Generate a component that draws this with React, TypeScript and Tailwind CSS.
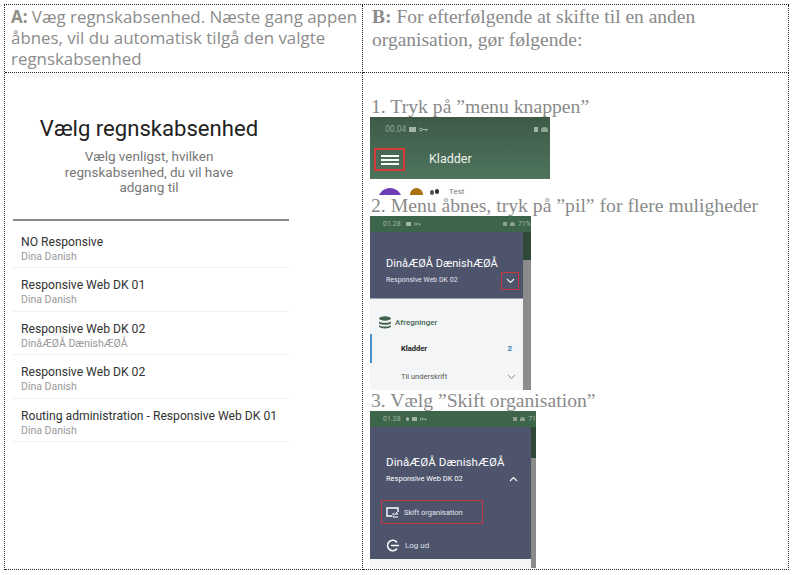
const serif = "font-['Liberation_Serif',serif]";

const orgs = [
  ["NO Responsive", "Dina Danish"],
  ["Responsive Web DK 01", "Dina Danish"],
  ["Responsive Web DK 02", "DinåÆØÅ DænishÆØÅ"],
  ["Responsive Web DK 02", "Dina Danish"],
  ["Routing administration - Responsive Web DK 01", "Dina Danish"],
];

function StatusBar({ time, extra, battery }: { time: string; extra?: boolean; battery: string }) {
  return (
    <div className="flex h-[16px] items-center justify-between bg-[#3d6549] pl-[13px] text-[7px] text-[#a3b5a8] font-['Roboto',sans-serif]">
      <div className="flex items-center gap-[3px]">
        <span className="mr-[2px]">{time}</span>
        {extra && <span className="h-[4px] w-[3px] rounded-full bg-[#a3b5a8]" />}
        <span className="h-[4px] w-[5px] bg-[#a3b5a8]" />
        <svg width="7" height="4" viewBox="0 0 7 4"><circle cx="1.5" cy="2" r="1.2" fill="none" stroke="#a3b5a8" strokeWidth="0.8" /><path d="M3 2h4M5.5 2v1.5" stroke="#a3b5a8" strokeWidth="0.8" /></svg>
      </div>
      <div className="flex items-center gap-[3px]">
        <span className="h-[4px] w-[4px] bg-[#8ea094]" />
        <span className="h-[4px] w-[5px] rounded-t-full bg-[#8ea094]" />
        <span className="whitespace-nowrap">{battery}</span>
      </div>
    </div>
  );
}

function Shot1() {
  return (
    <div className="h-[78px] w-[180px] overflow-hidden">
      <div className="h-[62px] bg-gradient-to-b from-[#3e5a47] to-[#4e745c] shadow-[0_1px_1px_#c4c4c4]">
        <div className="flex h-[25px] items-center justify-between pl-[15px] pr-[2px] text-[8.5px] text-[#8fa597] font-['Roboto',sans-serif]">
          <div className="flex items-center gap-[3px]">
            <span>00.04</span>
            <span className="h-[5px] w-[7px] bg-[#a3b5a8]" />
            <svg width="9" height="5" viewBox="0 0 9 5"><circle cx="2" cy="2.5" r="1.4" fill="none" stroke="#a3b5a8" /><path d="M3.500 2.500H9M7 2.500v2" stroke="#a3b5a8" /></svg>
          </div>
          <div className="flex items-center gap-[3px]">
            <span className="h-[5px] w-[4px] bg-[#a3b5a8]" />
            <span className="h-[5px] w-[7px] rounded-t-full bg-[#8fa597]" />
          </div>
        </div>
        <div className="mt-[6px] flex items-center pl-[4px]">
          <div className="flex h-[23px] w-[31px] flex-col items-center justify-center gap-[2px] border-2 border-[#d8393a]">
            <span className="h-[2px] w-[18px] bg-white" />
            <span className="h-[2px] w-[18px] bg-white" />
            <span className="h-[2px] w-[18px] bg-white" />
          </div>
          <span className="ml-[24px] text-[12.5px] text-[#eef2ef] font-['Roboto',sans-serif]">Kladder</span>
        </div>
      </div>
      <div className="flex items-start bg-white pl-[8px] pt-[9px]">
        <span className="h-[24px] w-[24px] rounded-full bg-[#6c3fb5]" />
        <span className="ml-[8px] h-[14px] w-[13px] rounded-full bg-[#a66f10]" />
        <span className="ml-[7px] mt-[2px] h-[5px] w-[4px] rounded-full bg-[#555]" />
        <span className="ml-[1px] mt-[1px] h-[5px] w-[4px] rounded-full bg-[#333]" />
        <span className="ml-[10px] text-[8px] leading-[8px] text-[#777] font-['Roboto',sans-serif]">Test</span>
      </div>
    </div>
  );
}

function Shot2() {
  return (
    <div className="flex h-[174px] w-[161px] flex-col overflow-hidden font-['Roboto',sans-serif]">
      <StatusBar time="01.28" battery="71%" />
      <div className="flex min-h-0 flex-1">
        <div className="flex w-[153px] flex-col">
          <div className="relative h-[67px] border-b border-[#9ea3b3] bg-[#4d546c] pl-[16px] pt-[25px] text-white">
            <div className="text-[11px] leading-[14px] whitespace-nowrap">DinåÆØÅ DænishÆØÅ</div>
            <div className="mt-[3px] text-[7px] leading-[12px] text-[#e4e6ec] whitespace-nowrap">Responsive Web DK 02</div>
            <div className="absolute left-[131px] top-[40px] flex h-[18px] w-[18px] items-center justify-center border border-[#c8373d]">
              <svg width="9" height="6" viewBox="0 0 9 6"><path d="M1 1l3.500 3.500L8 1" fill="none" stroke="#f3f3f3" strokeWidth="1.2" /></svg>
            </div>
          </div>
          <div className="relative flex-1 bg-[#f4f5f6]">
            <div className="flex items-center gap-[3px] pl-[8px] pt-[17px] text-[8px] font-medium leading-[12px] text-[#42644f]">
              <svg width="14" height="13" viewBox="0 0 14 13"><ellipse cx="7" cy="2.500" rx="6" ry="2.200" fill="#42644f" /><path d="M1 5.200c1 2 11 2 12 0v2c-1 2-11 2-12 0zM1 9c1 2 11 2 12 0v1.500c-1 2.500-11 2.500-12 0z" fill="#42644f" /></svg>
              Afregninger
            </div>
            <div className="absolute left-0 top-[35px] h-[29px] w-[2px] bg-[#4a90c8]" />
            <div className="flex items-center justify-between pl-[31px] pr-[11px] pt-[14px] text-[7.5px] font-bold leading-[12px] text-[#222]">
              Kladder <span className="text-[8px] text-[#3d81ad]">2</span>
            </div>
            <div className="flex items-center justify-between pl-[31px] pr-[7px] pt-[16px] text-[7.5px] leading-[12px] text-[#555]">
              Til underskrift
              <svg width="9" height="6" viewBox="0 0 9 6"><path d="M1 1l3.500 3.500L8 1" fill="none" stroke="#888" /></svg>
            </div>
          </div>
        </div>
        <div className="flex w-[8px] flex-col">
          <div className="h-[28px] bg-[#2e4a37]" />
          <div className="flex-1 bg-[#8b8b8b]" />
        </div>
      </div>
    </div>
  );
}

function Shot3() {
  return (
    <div className="flex h-[157px] w-[166px] flex-col overflow-hidden font-['Roboto',sans-serif]">
      <StatusBar time="01.28" extra battery="71" />
      <div className="flex min-h-0 flex-1">
        <div className="flex w-[161px] flex-col">
          <div className="relative flex-1 bg-[#4d546c] text-white">
            <div className="pl-[16px] pt-[28px] text-[11.5px] leading-[14px] tracking-[0.1px] whitespace-nowrap">DinåÆØÅ DænishÆØÅ</div>
            <div className="flex items-center justify-between pl-[16px] pr-[13px] pt-[4px] text-[7.5px] leading-[12px] whitespace-nowrap">
              Responsive Web DK 02
              <svg width="9" height="6" viewBox="0 0 9 6"><path d="M1 5l3.500-3.500L8 5" fill="none" stroke="#f3f3f3" strokeWidth="1.2" /></svg>
            </div>
            <div className="ml-[11px] mt-[15px] flex h-[24px] w-[102px] items-center gap-[5px] border border-[#c8373d] pl-[4px] pt-[2px] text-[7.5px] text-[#e4e6ec]">
              <svg width="13" height="12" viewBox="0 0 13 12"><path d="M12 5V1H1v8h5" fill="none" stroke="#fff" strokeWidth="1.4" /><path d="M6 7h6M10 5l2 2M7 10h5M8 8.500L6.500 10" fill="none" stroke="#fff" /></svg>
              Skift organisation
            </div>
            <div className="ml-[16px] mt-[15px] flex items-center gap-[6px] text-[8px] text-[#dfe1e7]">
              <svg width="13" height="13" viewBox="0 0 13 13"><path d="M11 3.500A5.200 5.200 0 1 0 11 9.500" fill="none" stroke="#fff" strokeWidth="1.5" /><path d="M5 6.500h8" stroke="#fff" strokeWidth="1.5" /></svg>
              Log ud
            </div>
          </div>
          <div className="h-[9px] bg-[#f4f5f6]" />
        </div>
        <div className="flex w-[5px] flex-col">
          <div className="h-[31px] bg-[#2e4a37]" />
          <div className="flex-1 bg-[#8b8b8b]" />
        </div>
      </div>
    </div>
  );
}

export default function App() {
  return (
    <div className="h-[575px] w-[795px] overflow-hidden bg-white pl-[4px] pt-[4px]">
      <div className="grid h-[566px] w-[785px] grid-cols-[358px_426px] grid-rows-[68px_497px] border-t border-l border-dotted border-[#222]">
        <div className="border-r border-b border-dotted border-[#222] pl-[6px] pt-[1px] text-[16.9px] leading-[21px] text-[#8c8c8c] font-['Open_Sans',sans-serif]">
          <b className="text-[#8f8f85]">A:</b> Væg regnskabsenhed. Næste gang appen åbnes, vil du automatisk tilgå den valgte regnskabsenhed
        </div>
        <div className={`border-r border-b border-dotted border-[#222] pl-[9px] pt-[0px] text-[19.5px] leading-[23px] text-[#8a8a8a] ${serif}`}>
          <b>B:</b> For efterfølgende at skifte til en anden<br />organisation, gør følgende:
        </div>
        <div className="flex flex-col items-start border-r border-b border-dotted border-[#222] pl-[8px]">
          <div className="mt-[1px] h-[3px] w-[276px] bg-[#f6f6f6]" />
          <div className="w-[272px] pt-[36px] text-center font-['Roboto',sans-serif]">
            <h1 className="text-[22.1px] font-normal leading-[30px] text-[#222]">Vælg regnskabsenhed</h1>
            <p className="mx-auto mt-[6px] w-[190px] text-[13.5px] leading-[15.5px] text-[#777]">Vælg venligst, hvilken regnskabsenhed, du vil have adgang til</p>
          </div>
          <div className="mt-[23px] w-[276px] border-t-2 border-[#8a8a92] pt-[4px] font-['Roboto',sans-serif]">
            {orgs.map(([name, person], i) => (
              <div key={i} className="h-[43.500px] border-b border-[#f0f0f0] pl-[8px] pt-[10px]">
                <div className="text-[12.15px] leading-[15px] text-[#333] whitespace-nowrap">{name}</div>
                <div className="mt-[1px] text-[10.500px] leading-[12px] text-[#999]">{person}</div>
              </div>
            ))}
          </div>
        </div>
        <div className={`flex flex-col items-start border-r border-b border-dotted border-[#222] pl-[7px] text-[19.7px] text-[#8a8a8a] ${serif}`}>
          <div className="ml-[1px] mt-[23px] h-[21px] leading-[21px]">1. Tryk på ”menu knappen”</div>
          <Shot1 />
          <div className="ml-[1px] h-[21px] whitespace-nowrap leading-[21px]">2. Menu åbnes, tryk på ”pil” for flere muligheder</div>
          <Shot2 />
          <div className="ml-[1px] h-[21px] leading-[21px]">3. Vælg ”Skift organisation”</div>
          <Shot3 />
        </div>
      </div>
    </div>
  );
}
